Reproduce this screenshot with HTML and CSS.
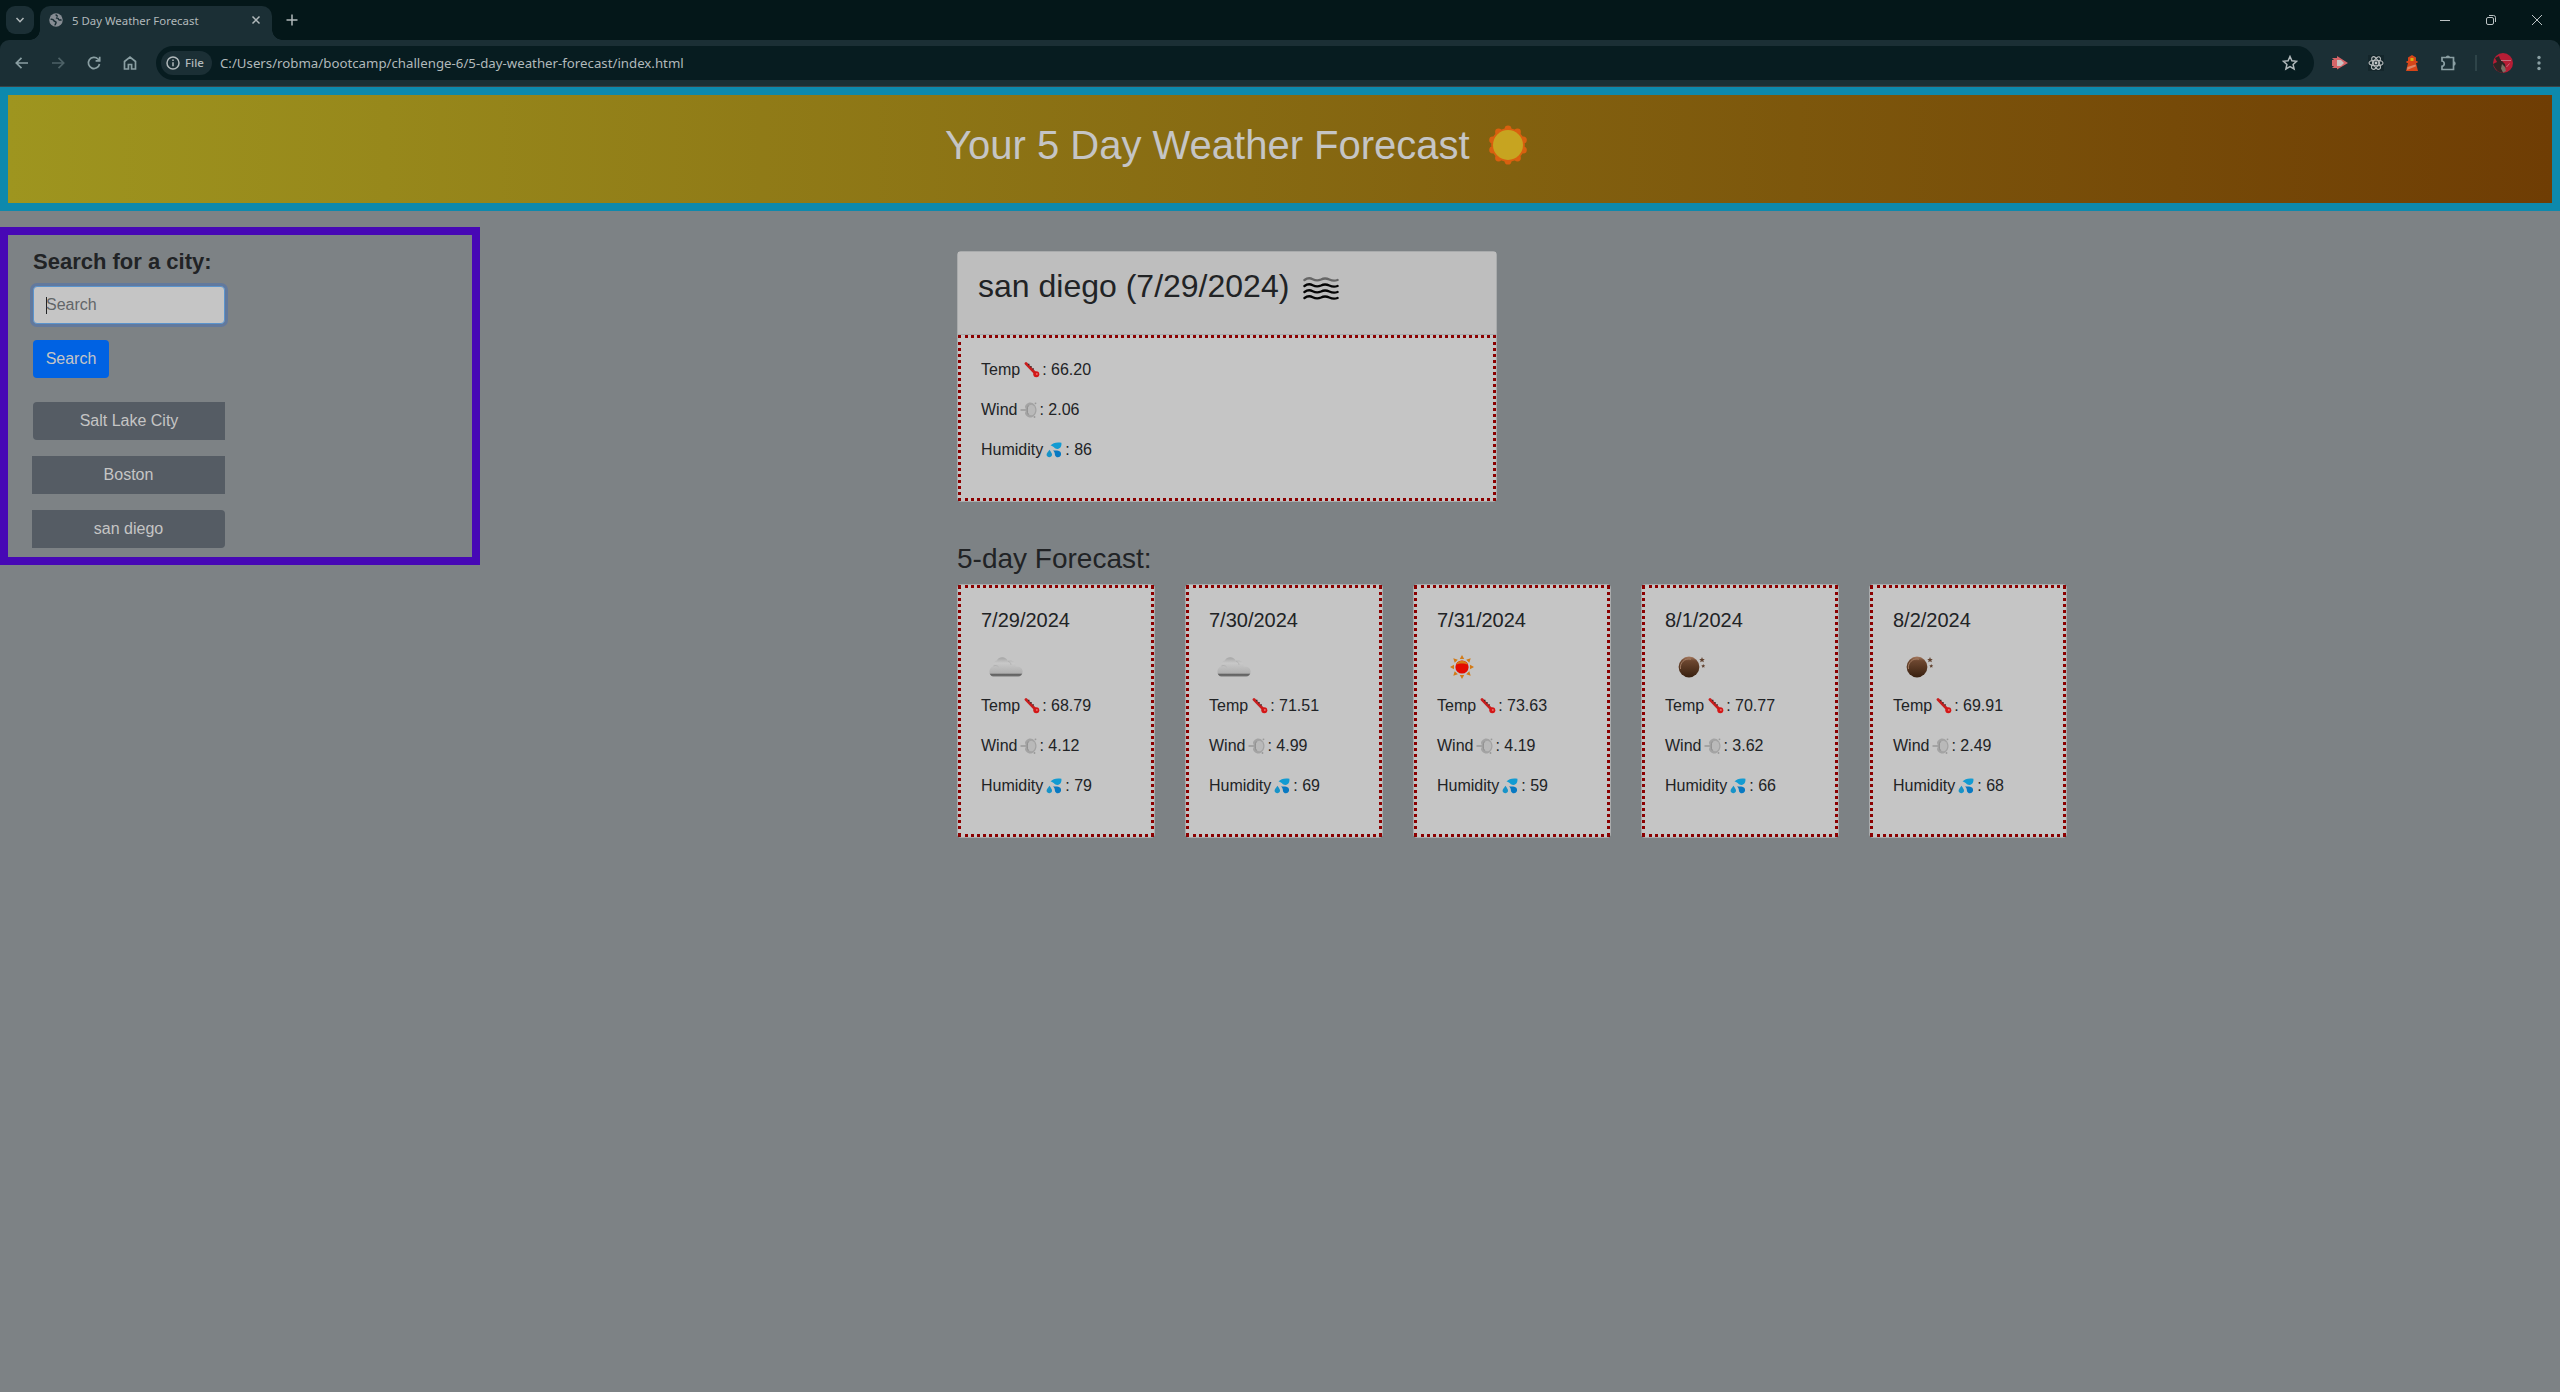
FILE: index.html
```html
<!DOCTYPE html>
<html lang="en">
<head>
<meta charset="utf-8">
<title>5 Day Weather Forecast</title>
<link rel="stylesheet" href="styles.css">
</head>
<body>
<svg class="defs" aria-hidden="true">
  <defs>
    <linearGradient id="cloudFill" x1="0" y1="0" x2="0" y2="1"><stop offset="0" stop-color="#a5a5a5"/><stop offset=".3" stop-color="#c8c8c8"/><stop offset=".82" stop-color="#b0b0b0"/><stop offset=".9" stop-color="#606060"/><stop offset="1" stop-color="#777"/></linearGradient>
    <linearGradient id="moonFill" x1="0" y1="0" x2="0" y2="1"><stop offset="0" stop-color="#a77b61"/><stop offset=".2" stop-color="#6d4730"/><stop offset="1" stop-color="#38200f"/></linearGradient>
    <symbol id="thermo" viewBox="0 0 16 16"><path d="M2 1.500 12 12" stroke="#c81e1e" stroke-width="2.800" stroke-linecap="round"/><circle cx="12.300" cy="12.300" r="3" fill="#d31717"/><path d="M4.800 1.800v1.400M7 4v1.400M9.200 6.200v1.400" stroke="#222" stroke-width="1.200"/><circle cx="12.800" cy="12" r="1" fill="#e66"/></symbol>
    <symbol id="wind" viewBox="0 0 18 16"><path d="M.5 8h6" stroke="#949494" stroke-width="1.400"/><path d="M9.500.5C13 0 16.500 3.500 16.500 8s-3.500 8-7 7.500C7.500 15 5 13 5 11c1-2 1-4 0-6 0-2 2.500-4 4.500-4.500z" fill="#a3a3a3"/><ellipse cx="11.300" cy="8" rx="4" ry="5.200" fill="#b9b9b9"/><path d="M8.300 3.500c-1.400 2.500-1.400 6.500 0 9" stroke="#8f8f8f" fill="none"/><circle cx="15.500" cy="1.300" r=".9" fill="#999"/><circle cx="14.500" cy="15" r=".9" fill="#999"/></symbol>
    <symbol id="drops" viewBox="0 0 16 16"><path d="M4.500 3.500C7 1 10 .1 15.400.8 15.800 4 14.500 6.600 11.500 6.900 8.500 7 7.600 3.800 4.500 3.500z" fill="#129bd2"/><path d="M3.400 7.800C5 10 6.200 11.600 6 13 5.500 16 1 15.700.6 13 .4 11.600 2.200 9.800 3.400 7.800z" fill="#1793c8"/><path d="M7 8.600c3-.3 6-.2 7.300 1.200 1.300 1.500 1 4-.6 5-2.200 1.200-4.600-.2-4.800-2.400-.1-1.500-.6-2.700-1.900-3.800z" fill="#0879c2"/></symbol>
    <symbol id="cloud" viewBox="0 0 34 20"><path d="M4 19.500C-.8 18.500-1 11 4.500 9 4 6 5.500 4 7.800 3.600 10-.8 17-.8 18.800 4c4-1.500 8 .8 8 5.500 4-.5 7 1.800 6.800 5.200-.2 3-2 4.800-4.500 4.800z" fill="url(#cloudFill)"/><path d="M4.500 9c2-1 3.800-.5 5 1M18.800 4c2 .8 3 2 3.200 3.800" fill="none" stroke="#b2b2b2"/></symbol>
    <symbol id="sun" viewBox="0 0 24 24"><path d="m12 0 2.200 4h-4.400zM12 24l2.200-4h-4.400zM0 12l4-2.200v4.400zM24 12l-4-2.200v4.400zM3.300 3.300l4.500 1.400-3.100 3.100zM20.700 3.300l-4.500 1.400 3.100 3.100zM3.300 20.700l4.500-1.400-3.100-3.100zM20.700 20.700l-4.500-1.400 3.100-3.100z" fill="#d27a16"/><circle cx="12" cy="12" r="6.600" fill="#e30b00"/><path d="M6 9.500A6.600 6.600 0 0 1 18 9.500c-3-1.500-9-1.500-12 0z" fill="#d57b16"/></symbol>
    <symbol id="moon" viewBox="0 0 28 22"><circle cx="11" cy="11" r="10.400" fill="url(#moonFill)"/><path d="M2.500 13A8.500 8.500 0 0 1 13 3.200" fill="none" stroke="#aa8269" stroke-width=".9"/><path d="m24 1 .8 1.900 2 .1-1.500 1.300.5 2L24 5.200l-1.800 1.100.5-2L21.200 3l2-.1zM25.200 8l.6 1.300 1.400.1-1.100 1 .4 1.400-1.300-.8-1.200.8.300-1.400-1-1 1.400-.1z" fill="#61422f"/></symbol>
  </defs>
</svg>

<header class="browser">
  <div class="tabstrip">
    <div class="tab-search"><svg viewBox="0 0 10 10" width="10" height="10"><path d="m1.500 3 3.500 3.700L8.500 3" class="line"/></svg></div>
    <div class="tab">
      <svg viewBox="0 0 16 16" width="14" height="14"><circle cx="8" cy="8" r="7.700" fill="#868c93"/><path d="M8.500 1.500c-.8 1.600.4 2 1.700 1.800M1.800 7.300c1.700-.3 3.200.2 3.700 1.200.4 1.400 2 1 2.500 2 .5 1.400-1.200 1.600-1 3.700M14.300 7.500c-1.500 1.200-3.600.5-3.600-.6 0-1.300-1.700-.8-2.500-1.600" stroke="#1b2f35" stroke-width="1.700" fill="none"/></svg>
      <span class="tab-title">5 Day Weather Forecast</span>
      <svg class="tab-close" viewBox="0 0 10 10" width="10" height="10"><path d="m1.500 1.500 7 7m0-7-7 7" class="line"/></svg>
    </div>
    <svg class="new-tab" viewBox="0 0 12 12" width="12" height="12"><path d="M6 .5v11M.5 6h11" class="line"/></svg>
    <div class="window-controls">
      <svg viewBox="0 0 12 12" width="12" height="12"><path d="M1 6.500h10" class="thin"/></svg>
      <svg viewBox="0 0 12 12" width="12" height="12"><rect x="1.500" y="3.500" width="7" height="7" rx="1.500" class="thin"/><path d="M4 1.500h4.500a2 2 0 0 1 2 2V8" class="thin"/></svg>
      <svg viewBox="0 0 12 12" width="12" height="12"><path d="m1 1 10 10m0-10L1 11" class="thin"/></svg>
    </div>
  </div>
  <div class="toolbar">
    <div class="nav">
      <svg viewBox="0 0 16 16" width="16" height="16"><path d="M14 8H2.500m5-5.200L2.300 8l5.200 5.200" class="nav-line"/></svg>
      <svg class="off" viewBox="0 0 16 16" width="16" height="16"><path d="M2 8h11.500m-5-5.200L13.700 8l-5.200 5.200" class="nav-line"/></svg>
      <svg viewBox="0 0 16 16" width="16" height="16"><path d="M13.500 9A5.600 5.600 0 1 1 12 4l1.500 1.600M13.700 1.700v4.100H9.600" class="nav-line"/></svg>
      <svg viewBox="0 0 16 16" width="16" height="16"><path d="M2.500 14V6.500L8 2l5.500 4.500V14H9.600V9.500H6.400V14z" class="nav-line"/></svg>
    </div>
    <div class="omnibox">
      <div class="file-chip"><svg viewBox="0 0 14 14" width="14" height="14"><circle cx="7" cy="7" r="6" class="line"/><path d="M7 6.200v4M7 3.600V5" class="line"/></svg>File</div>
      <span class="url">C:/Users/robma/bootcamp/challenge-6/5-day-weather-forecast/index.html</span>
      <svg class="star" viewBox="0 0 16 16" width="16" height="16"><path d="m8 1.500 1.900 4.300 4.700.5-3.500 3.100 1 4.600L8 11.600 3.900 14l1-4.600L1.400 6.300l4.700-.5z" class="line"/></svg>
    </div>
    <div class="extensions">
      <svg viewBox="0 0 16 16" width="16" height="16"><path d="M0 3h5V1l11 7-11 6.500V13H0l2-2H0V5h2z" fill="#d66568"/><path d="M5 5h4l3 3-3 3H5z" fill="#c8c1c1"/></svg>
      <svg viewBox="0 0 16 16" width="16" height="16"><path d="M0 0h16v16H0z" fill="#14262b"/><g fill="none" stroke="#b8bcbd" stroke-width="1.100"><ellipse cx="8" cy="8" rx="7" ry="2.800"/><ellipse cx="8" cy="8" rx="7" ry="2.800" transform="rotate(60 8 8)"/><ellipse cx="8" cy="8" rx="7" ry="2.800" transform="rotate(120 8 8)"/></g><circle cx="8" cy="8" r="1.400" fill="#c5c8c9"/></svg>
      <svg viewBox="0 0 16 16" width="16" height="16"><path d="M4 2.500 8 0l4 2.500V6h1.500v2H12l2 8H2l2-8H2.500V6H4z" fill="#d64519"/><path d="m3.500 12 8-2.500.5 1.800L3 15z" fill="#d9896b"/><path d="M6.500 3h3v3h-3z" fill="#d6b010"/></svg>
      <svg viewBox="0 0 18 18" width="18" height="18"><path d="M2 3.500h11.500V15.500H2v-3.200c3-.6 3-4.700 0-5.300z" class="nav-line"/><path d="M5.800 3.500a2.100 2.100 0 0 1 4.200 0zM13.500 7.300a2.200 2.200 0 0 1 0 4.400z" fill="#8a9fa3"/></svg>
      <i class="divider"></i>
      <svg class="avatar" viewBox="0 0 20 20" width="20" height="20"><circle cx="10" cy="10" r="10" fill="#b71d35"/><path d="M2 5l4-2 1 3 2 2 3 3 .5 3L10 20l-5-1.500L2 15l-2-4 4-2z" fill="#2c2524"/><path d="m9 11 3 3 1 4-3 1.500-2-4z" fill="#777267"/><path d="M8 7.500h10M13.500 14l3-3.500" stroke="#c76d7c"/></svg>
      <svg viewBox="0 0 4 16" width="4" height="16"><g fill="#8a9fa3"><circle cx="2" cy="2.500" r="1.700"/><circle cx="2" cy="8" r="1.700"/><circle cx="2" cy="13.500" r="1.700"/></g></svg>
    </div>
  </div>
</header>

<div class="banner">
  <h1>Your 5 Day Weather Forecast</h1>
  <svg viewBox="-20 -20 40 40" width="40" height="40"><g fill="#d9600f"><circle r="16.800"/><circle cy="-16.200" r="3.400"/><circle cy="16.200" r="3.400"/><circle cx="-9.500" cy="-13.100" r="3.400"/><circle cx="9.500" cy="-13.100" r="3.400"/><circle cx="-9.500" cy="13.100" r="3.400"/><circle cx="9.500" cy="13.100" r="3.400"/><circle cx="-15.400" cy="-5" r="3.400"/><circle cx="15.400" cy="-5" r="3.400"/><circle cx="-15.400" cy="5" r="3.400"/><circle cx="15.400" cy="5" r="3.400"/></g><circle r="15" fill="#c7a420"/></svg>
</div>

<main class="layout">
  <aside class="sidebar">
    <h3>Search for a city:</h3>
    <div class="search-input"><i class="caret"></i>Search</div>
    <button class="btn primary">Search</button>
    <div class="history">
      <button class="btn">Salt Lake City</button>
      <button class="btn">Boston</button>
      <button class="btn">san diego</button>
    </div>
  </aside>
  <section class="results">
    <article class="card today">
      <div class="card-header"><h2>san diego (7/29/2024)</h2><svg viewBox="0 0 36 24" width="36" height="24"><g fill="none" stroke="#050505" stroke-width="2.400" stroke-linecap="round"><path stroke="#666" d="M1.500 4q4-3 8.200-.8t8.300.3q4-2 8.300 0t8.200.5"/><path d="M1.500 10q4-3 8.200-.8t8.300.3q4-2 8.300 0t8.200.5M1.500 16q4-3 8.200-.8t8.300.3q4-2 8.300 0t8.200.5M1.500 22q4-3 8.200-.8t8.300.3q4-2 8.300 0t8.200.5"/></g></svg></div>
      <div class="card-body">
        <p>Temp<svg class="ic thermo"><use href="#thermo"/></svg>: 66.20</p>
        <p>Wind<svg class="ic wind"><use href="#wind"/></svg>: 2.06</p>
        <p>Humidity<svg class="ic drops"><use href="#drops"/></svg>: 86</p>
      </div>
    </article>
    <h3 class="forecast-title">5-day Forecast:</h3>
    <div class="forecast">
      <article class="card"><div class="card-body"><h5>7/29/2024</h5><div class="sky"><svg class="cloud"><use href="#cloud"/></svg></div><p>Temp<svg class="ic thermo"><use href="#thermo"/></svg>: 68.79</p><p>Wind<svg class="ic wind"><use href="#wind"/></svg>: 4.12</p><p>Humidity<svg class="ic drops"><use href="#drops"/></svg>: 79</p></div></article>
      <article class="card"><div class="card-body"><h5>7/30/2024</h5><div class="sky"><svg class="cloud"><use href="#cloud"/></svg></div><p>Temp<svg class="ic thermo"><use href="#thermo"/></svg>: 71.51</p><p>Wind<svg class="ic wind"><use href="#wind"/></svg>: 4.99</p><p>Humidity<svg class="ic drops"><use href="#drops"/></svg>: 69</p></div></article>
      <article class="card"><div class="card-body"><h5>7/31/2024</h5><div class="sky"><svg class="sun"><use href="#sun"/></svg></div><p>Temp<svg class="ic thermo"><use href="#thermo"/></svg>: 73.63</p><p>Wind<svg class="ic wind"><use href="#wind"/></svg>: 4.19</p><p>Humidity<svg class="ic drops"><use href="#drops"/></svg>: 59</p></div></article>
      <article class="card"><div class="card-body"><h5>8/1/2024</h5><div class="sky"><svg class="moon"><use href="#moon"/></svg></div><p>Temp<svg class="ic thermo"><use href="#thermo"/></svg>: 70.77</p><p>Wind<svg class="ic wind"><use href="#wind"/></svg>: 3.62</p><p>Humidity<svg class="ic drops"><use href="#drops"/></svg>: 66</p></div></article>
      <article class="card"><div class="card-body"><h5>8/2/2024</h5><div class="sky"><svg class="moon"><use href="#moon"/></svg></div><p>Temp<svg class="ic thermo"><use href="#thermo"/></svg>: 69.91</p><p>Wind<svg class="ic wind"><use href="#wind"/></svg>: 2.49</p><p>Humidity<svg class="ic drops"><use href="#drops"/></svg>: 68</p></div></article>
    </div>
  </section>
</main>
</body>
</html>
```
FILE: styles.css
```css
* { box-sizing: border-box; }
body { margin: 0; height: 1392px; overflow: hidden; background: #7d8285; color: #212325; font: 16px/24px "Liberation Sans", Arial, sans-serif; }
h1, h2, h3, h5, p { margin: 0; font-weight: 400; }
svg { display: block; flex: none; }
.defs { position: absolute; width: 0; height: 0; }

/* browser frame */
.browser { height: 87px; background: #041719; font-family: "Noto Sans", sans-serif; color: #b1b9bb; border-bottom: 1px solid #3b4346; }
.line { fill: none; stroke: #b1b9bb; stroke-width: 1.5; }
.thin { fill: none; stroke: #bcc3c4; stroke-width: 1; }
.nav-line { fill: none; stroke: #8a9fa3; stroke-width: 1.7; }
.tabstrip { display: flex; height: 40px; padding: 6px 0 0 6px; }
.tab-search { width: 28px; height: 28px; border-radius: 9px; background: #1b2f35; display: grid; place-items: center; }
.tab { position: relative; width: 232px; height: 34px; margin-left: 6px; padding: 0 11px 6px 9px; display: flex; align-items: center; border-radius: 10px 10px 0 0; background: #1b2f35; font-size: 11.4px; }
.tab::before, .tab::after { content: ""; position: absolute; bottom: 0; width: 10px; height: 10px; }
.tab::before { left: -10px; background: radial-gradient(circle at 0 0, transparent 9.5px, #1b2f35 10px); }
.tab::after { right: -10px; background: radial-gradient(circle at 100% 0, transparent 9.5px, #1b2f35 10px); }
.tab-title { margin-left: 9px; padding-top: 2px; white-space: nowrap; }
.tab-close { margin-left: auto; }
.new-tab { margin: 8px 0 0 14px; }
.window-controls { display: flex; gap: 34px; margin: 8px 17px 0 auto; }
.toolbar { display: flex; align-items: center; height: 46px; background: #1b2f35; border-radius: 9px 9px 0 0; }
.nav { display: flex; gap: 20px; width: 156px; padding-left: 14px; }
.off { opacity: .45; }
.omnibox { flex: 1; display: flex; align-items: center; height: 34px; border-radius: 17px; background: #071c20; padding: 0 16px 0 5px; }
.file-chip { width: 51px; height: 24px; border-radius: 12px; background: #1b2f35; display: flex; align-items: center; gap: 5px; padding-left: 5px; font-size: 11.5px; font-weight: 500; }
.url { margin-left: 8px; font-size: 13.25px; }
.star { margin-left: auto; }
.extensions { display: flex; align-items: center; width: 246px; padding-left: 18px; gap: 20px; }
.divider { width: 2px; height: 16px; margin: 0 -4px 0 -3px; background: #2e4449; }
.avatar { margin-right: 4px; }

/* page */
.banner { height: 124px; border: 8px solid #0d89ad; background: linear-gradient(to right, #9e951f, #6f3d04); display: flex; align-items: flex-start; padding: 23px 0 0 937px; color: #c5c5c5; }
.banner h1 { font-size: 40px; line-height: 54px; width: 543px; white-space: nowrap; }
.banner svg { margin-top: 7px; }
.layout { display: flex; align-items: flex-start; }
.sidebar { width: 480px; height: 338px; margin-top: 16px; padding: 15px 24px; border: 8px solid #4708b5; }
.sidebar h3 { margin-left: 1px; font-size: 22px; line-height: 24px; font-weight: 700; white-space: nowrap; }
.search-input { width: 192px; height: 38px; margin: 12px 0 0 1px; padding: 6px 12px; background: #c5c5c5; color: #626669; border: 1px solid #5b94cc; border-radius: 4px; box-shadow: 0 0 0 3px #62799d; display: flex; }
.caret { width: 1px; height: 17px; margin: 4px -1px 0 0; background: #212325; }
.btn { display: block; height: 38px; padding: 0 12px; border: 0; color: #c5c5c5; background: #555c64; font: inherit; }
.primary { width: 76px; margin: 16px 0 0 1px; border-radius: 4px; background: #0062e3; }
.history { display: flex; flex-direction: column; align-items: flex-end; gap: 16px; width: 193px; margin-top: 24px; }
.history .btn { width: 193px; }
.history .btn:first-child { width: 192px; border-radius: 4px 0 0 4px; }
.history .btn:last-child { border-radius: 0 4px 4px 0; }
.results { margin-left: 477px; padding-top: 40px; }
.card { background: #c5c5c5; border: 1px solid #a9abac; border-radius: 4px; }
.card-body { border: 3px dotted #8b0000; padding: 20px; }
.card-body p { display: flex; height: 24px; margin-bottom: 16px; white-space: pre; }
.today { width: 540px; height: 251px; }
.card-header { display: flex; height: 83px; padding: 11px 20px; background: #bebebe; border-bottom: 1px solid #a9abac; }
.card-header h2 { font-size: 32px; line-height: 46px; width: 325px; white-space: nowrap; }
.card-header svg { margin-top: 13px; }
.today .card-body { height: 166px; }
.ic { width: 16px; height: 16px; margin-top: 4px; }
.thermo { margin-left: 4px; margin-right: 2px; }
.wind { width: 18px; margin-left: 3px; margin-right: 1px; }
.drops { margin-left: 3px; margin-right: 3px; }
.forecast-title { margin-top: 40px; font-size: 28px; line-height: 34px; }
.forecast { display: flex; gap: 30px; margin-top: 8px; }
.forecast .card { width: 198px; height: 254px; }
.forecast .card-body { height: 252px; }
.card h5 { font-size: 20px; line-height: 24px; }
.sky { height: 62px; padding: 7px 0 0 8px; display: flex; align-items: center; }
.cloud { width: 34px; height: 20px; }
.sun { width: 24px; height: 24px; margin-left: 5px; }
.moon { width: 28px; height: 22px; margin-left: 5px; }
```
